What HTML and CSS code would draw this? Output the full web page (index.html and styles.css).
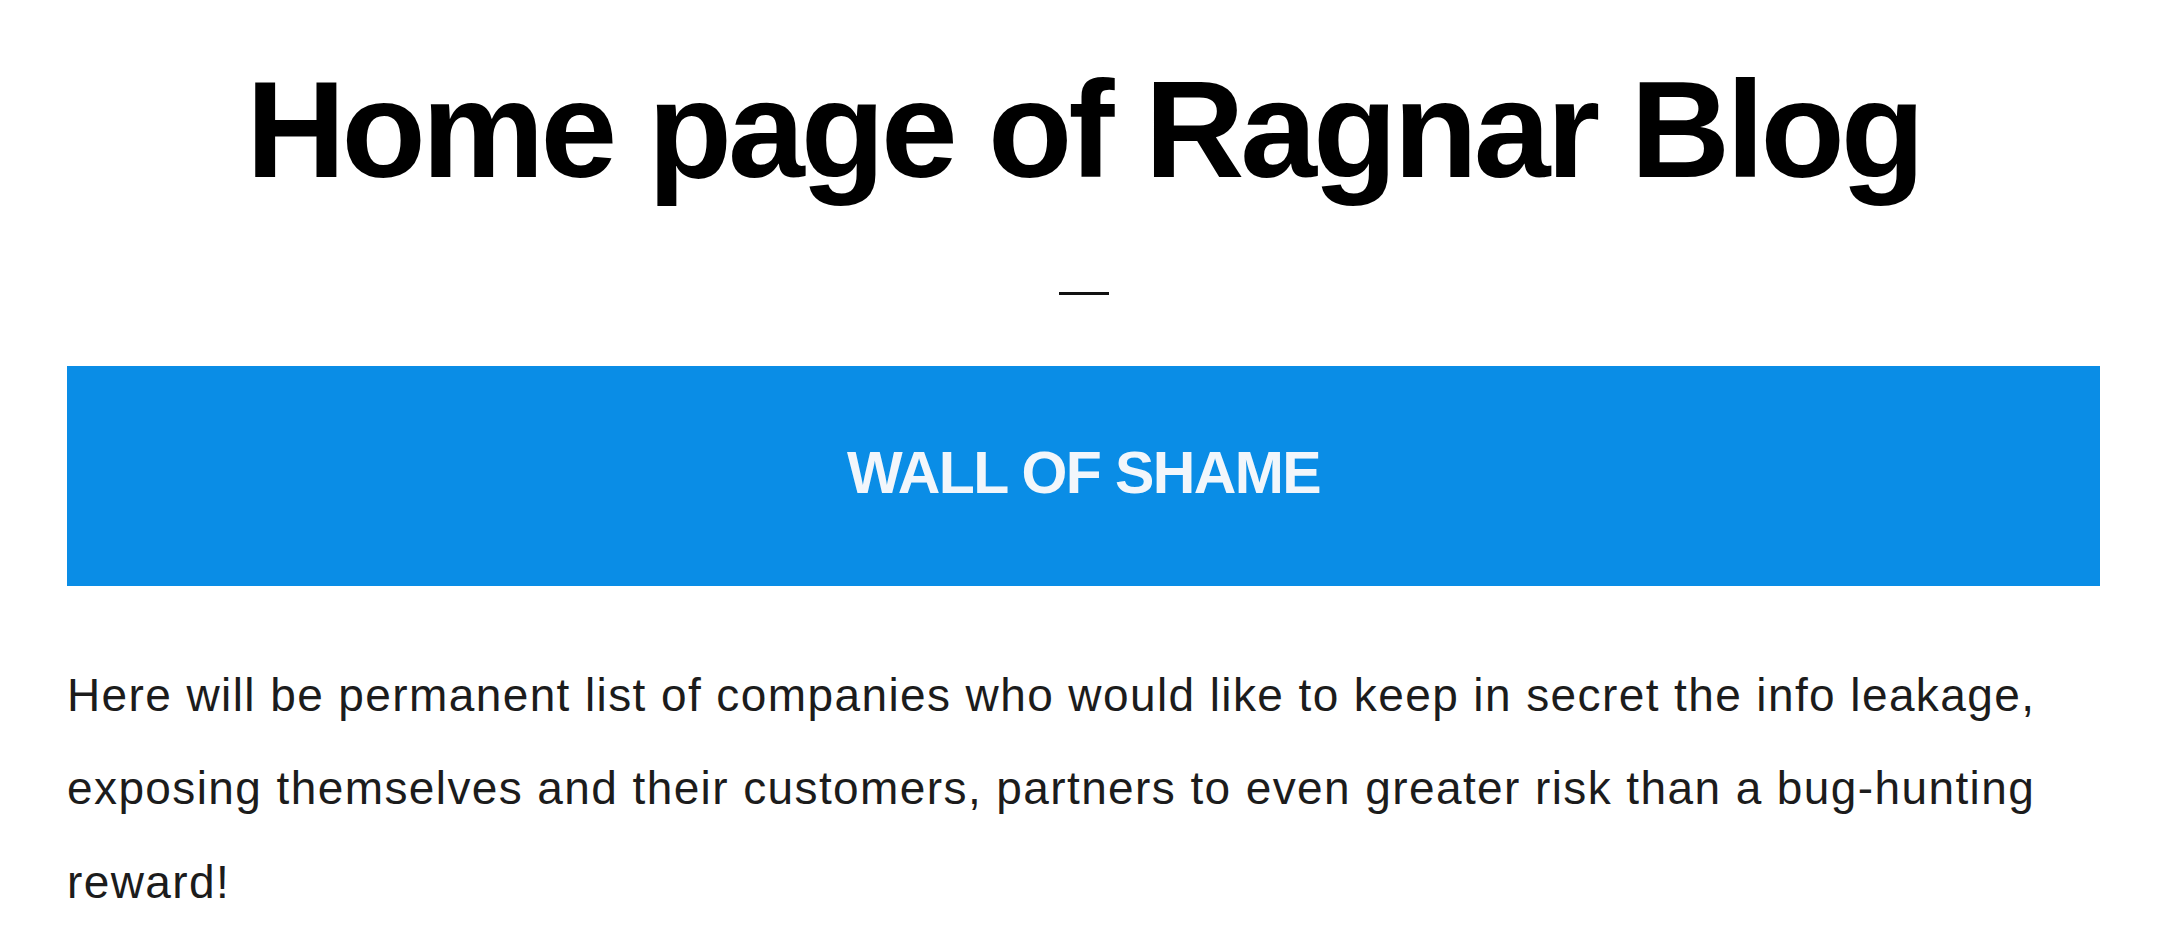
FILE: index.html
```html
<!DOCTYPE html>
<html lang="en">
<head>
<meta charset="utf-8">
<title>Home page of Ragnar Blog</title>
<link rel="stylesheet" href="styles.css">
</head>
<body>
<main class="page">
  <h1 class="title">Home page of Ragnar Blog</h1>
  <div class="rule"></div>
  <section class="banner">
    <h2 class="banner-text">WALL OF SHAME</h2>
  </section>
  <p class="intro">Here will be permanent list of companies who would like to keep in secret the info leakage, exposing themselves and their customers, partners to even greater risk than a bug-hunting reward!</p>
</main>
</body>
</html>
```
FILE: styles.css
```css
html, body {
  margin: 0;
  padding: 0;
  background: #ffffff;
}

body {
  font-family: "Liberation Sans", Arial, Helvetica, sans-serif;
  color: #1c1c1c;
}

.page {
  display: flex;
  flex-direction: column;
  align-items: center;
  margin: 0 61px 0 67px;
}

.title {
  margin: 50px 0 0;
  font-size: 138px;
  line-height: 1.15;
  font-weight: 700;
  color: #000000;
  letter-spacing: -4px;
}

.rule {
  width: 50px;
  height: 3px;
  background: #111111;
  margin-top: 83px;
}

.banner {
  align-self: stretch;
  margin-top: 71px;
  height: 220px;
  background: #0a8de6;
  display: flex;
  align-items: center;
  justify-content: center;
}

.banner-text {
  margin: 0 0 4px;
  font-size: 59px;
  line-height: 1.15;
  font-weight: 700;
  color: #f2f6fb;
  letter-spacing: -1.6px;
}

.intro {
  align-self: stretch;
  margin: 63px 0 0;
  font-size: 46px;
  line-height: 93.5px;
  color: #1c1c1c;
  letter-spacing: 1.4px;
}
```
